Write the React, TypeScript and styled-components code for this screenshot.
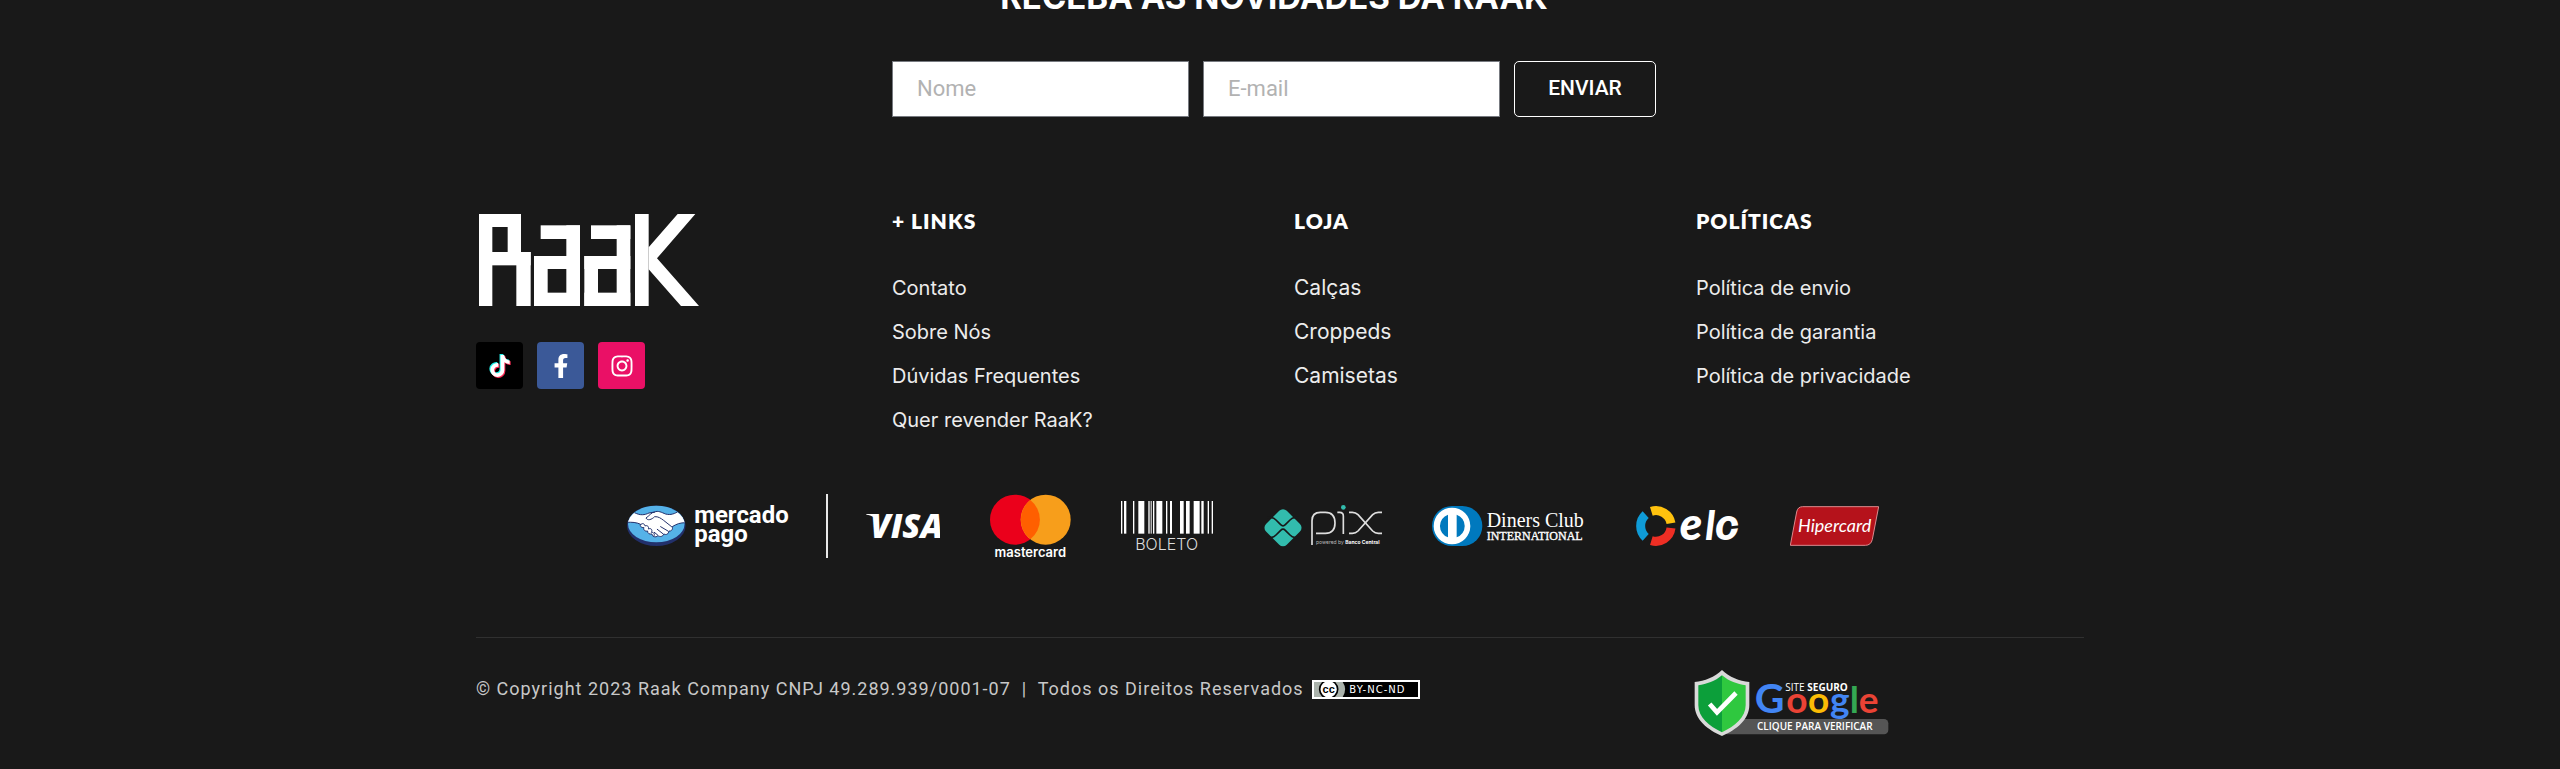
import React from "react";
import styled, { createGlobalStyle } from "styled-components";
import { FaFacebookF, FaInstagram, FaTiktok } from "react-icons/fa";

const ink = "#191919";
const display = '"Inter", "Noto Sans", sans-serif';
const body = '"Roboto", "Liberation Sans", sans-serif';

const GlobalStyle = createGlobalStyle`
  *, *::before, *::after { box-sizing: border-box; }
  html, body { margin: 0; background: ${ink}; }
  body { font-family: ${body}; color: #fff; }
`;

const Page = styled.footer`
  min-height: 100vh;
  background: ${ink};
  overflow: hidden;
`;

const Container = styled.div`
  width: 100%;
  max-width: 1608px;
  margin: 0 auto;
`;

const Columns = styled.div`
  display: grid;
  grid-template-columns: repeat(4, minmax(0, 1fr));
`;

const Newsletter = styled.section`
  grid-column: 2 / 4;
  margin-top: -23px;
  padding: 0 26px 0 14px;
`;

const Title = styled.h2`
  margin: 0 0 44px;
  font: 700 33px/40px ${display};
  text-align: center;
  white-space: nowrap;
`;

const Form = styled.form`
  display: flex;
  gap: 14px;
`;

const Field = styled.input`
  flex: 1;
  min-width: 0;
  height: 56px;
  padding: 0 24px 2px;
  border: 1px solid #777a80;
  border-radius: 0;
  background: #fff;
  color: #333;
  font: 400 22px ${body};
  &::placeholder { color: #b2b2b2; opacity: 1; }
`;

const Submit = styled.button`
  width: 142px;
  height: 56px;
  padding: 0 0 2px;
  border: 1px solid #fff;
  border-radius: 5px;
  background: transparent;
  color: #fff;
  font: 500 21px ${body};
`;

const Links = styled(Columns)`
  padding-top: 92px;
`;

const Brand = styled.div`
  padding-top: 5px;
`;

const LogoLink = styled.a`
  display: block;
  padding-left: 3px;
  svg { display: block; }
`;

const Socials = styled.div`
  display: flex;
  gap: 14px;
  margin-top: 36px;
`;

const Social = styled.a<{ $color: string }>`
  display: flex;
  align-items: center;
  justify-content: center;
  width: 47px;
  height: 47px;
  border-radius: 4px;
  background: ${(p) => p.$color};
  color: #fff;
`;

const Column = styled.nav`
  padding-left: 14px;
`;

const Heading = styled.h3`
  margin: 0 0 43px;
  font: 800 21px/24px "Lato", sans-serif;
  letter-spacing: 1px;
`;

const List = styled.ul<{ $large?: boolean }>`
  display: grid;
  gap: 20px;
  margin: 0;
  padding: 0;
  list-style: none;
  font: 400 ${(p) => (p.$large ? 21 : 20)}px/24px ${display};
`;

const TextLink = styled.a`
  color: #ececec;
  text-decoration: none;
`;

const Payments = styled.div`
  display: flex;
  justify-content: center;
  margin-top: 62px;
  padding-right: 55px;
  svg { display: block; }
`;

const Gateway = styled.div`
  margin-right: 38px;
  padding-right: 36px;
  border-right: 2px solid #e8e8e8;
`;

const Cards = styled.div`
  display: flex;
  gap: 50px;
`;

const Bottom = styled(Columns)`
  margin-top: 79px;
  padding-top: 32px;
  border-top: 1px solid #303030;
`;

const Copyright = styled.p`
  grid-column: 1 / 4;
  display: flex;
  align-items: center;
  gap: 8px;
  height: 38px;
  margin: 0;
  color: #c8c8c8;
  font: 400 18px/24px ${body};
  letter-spacing: 1px;
  white-space: pre;
`;

const SealLink = styled.a`
  padding-left: 12px;
  svg { display: block; }
`;

const Raak = () => (
  <svg width="220" height="92" viewBox="57 72 660 276" role="img" aria-label="RaaK" fill="#fff">
    <rect x="57" y="72" width="40" height="276" />
    <rect x="57" y="72" width="126" height="39" />
    <rect x="143" y="72" width="40" height="153" />
    <rect x="57" y="186" width="155" height="40" />
    <rect x="169" y="186" width="43" height="162" />
    {[222, 373].map((x) => (
      <g key={x}>
        <rect x={x + 20} y="106" width="118" height="41" />
        <rect x={x + 97} y="106" width="41" height="242" />
        <rect x={x} y="198" width="138" height="39" />
        <rect x={x} y="198" width="41" height="150" />
        <rect x={x} y="308" width="138" height="40" />
      </g>
    ))}
    <rect x="525" y="72" width="41" height="276" />
    <path d="M653 72h53L591 205l126 143h-54L566 238v-66z" />
  </svg>
);

const TikTok = () => (
  <svg width="24" height="26" viewBox="0 0 24 26" aria-hidden="true">
    <FaTiktok x={0} y={1} size={22} color="#25f4ee" />
    <FaTiktok x={2} y={3} size={22} color="#fe2c55" />
    <FaTiktok x={1} y={2} size={22} color="#fff" />
  </svg>
);

const MercadoPago = () => (
  <svg width="163" height="64" viewBox="50 42 490 192" role="img" aria-label="Mercado Pago">
    <defs>
      <clipPath id="mp"><ellipse cx="138" cy="132" rx="85" ry="53" /></clipPath>
    </defs>
    <ellipse cx="138" cy="137" rx="88" ry="61" fill="#22306b" />
    <ellipse cx="138" cy="132" rx="85" ry="55" fill="#55b2e8" />
    <g clipPath="url(#mp)" stroke="#22306b" strokeWidth="3" strokeLinejoin="round" strokeLinecap="round">
      <path d="M50 94L73 98C90 107 103 105 116 99L133 96C143 91 154 97 166 102C181 106 195 101 205 93L228 92V128C208 128 200 132 186 140C189 149 183 154 176 153C175 162 168 166 161 162C157 171 149 171 143 167C136 174 126 170 125 162C117 164 111 159 112 153C104 155 98 149 101 143C92 143 88 138 91 133C79 127 65 126 49 127Z" fill="#fff" />
      <path d="M133 96C123 96 117 108 107 114C112 123 124 119 133 110C144 109 152 115 160 121L184 140M151 140L173 153M141 148L159 162M132 157L142 165" fill="none" />
      <path d="M91 134C96 127 104 132 104 138C111 134 117 141 114 147C122 143 128 150 123 157C130 156 136 163 130 169" fill="none" />
    </g>
    <g fill="#fff" fontFamily="Roboto, sans-serif" fontWeight="700" fontSize="72">
      <text x="252" y="128">mercado</text>
      <text x="252" y="185">pago</text>
    </g>
  </svg>
);

const Visa = () => (
  <svg width="74" height="64" viewBox="768 42 222 192" role="img" aria-label="Visa" fill="#fff">
    <path d="M769 102H798L805 128C798 112 785 106 769 104Z" />
    <text x="781" y="173" fontFamily="Open Sans, sans-serif" fontStyle="italic" fontWeight="800" fontSize="99">VISA</text>
  </svg>
);

const Mastercard = () => (
  <svg width="81" height="64" viewBox="58 42 243 192" role="img" aria-label="Mastercard">
    <circle cx="133" cy="119" r="75" fill="#eb001b" />
    <circle cx="225" cy="119" r="75" fill="#f79e1b" />
    <path d="M179 60A75 75 0 0 1 179 178A75 75 0 0 1 179 60Z" fill="#ff5f00" />
    <text x="179" y="230" textAnchor="middle" fill="#fff" fontFamily="Inter, sans-serif" fontWeight="600" fontSize="39">mastercard</text>
  </svg>
);

const bars = [
  [450, 4], [459, 7], [486, 4], [502, 18], [532, 4], [539, 3], [546, 4], [556, 18],
  [585, 4], [597, 6], [627, 11], [645, 11], [668, 18], [691, 7], [710, 4], [722, 4],
];

const Boleto = () => (
  <svg width="92" height="64" viewBox="450 42 276 192" role="img" aria-label="Boleto">
    {bars.map(([x, w]) => (
      <rect key={x} x={x} y="63" width={w} height="98" fill="#fff" />
    ))}
    <text x="587" y="210" textAnchor="middle" fill="#ddd" fontFamily="Inter, sans-serif" fontWeight="300" fontSize="48">BOLETO</text>
  </svg>
);

const Pix = () => (
  <svg width="119" height="64" viewBox="66 42 357 192" role="img" aria-label="Pix">
    <rect x="82" y="99" width="88" height="88" rx="16" transform="rotate(45 126 143)" fill="#32bcad" />
    <g fill="none" stroke={ink} strokeWidth="5">
      <path d="M78 113H92C98 113 101 116 105 120L119 134Q126 141 133 134L147 120C151 116 154 113 160 113H174" />
      <path d="M78 172H92C98 172 101 169 105 165L119 151Q126 144 133 151L147 165C151 169 154 172 160 172H174" />
    </g>
    <g fill="none" stroke="#dedede" strokeWidth="5" strokeLinejoin="round">
      <path d="M213 195V122Q213 97 238 97H253Q282 97 282 129Q282 160 253 160H225" />
      <path d="M289 97H296Q307 97 307 108V162" />
      <path d="M324 97H334Q344 97 351 104L395 153Q402 160 412 160H423" />
      <path d="M324 160H334Q344 160 351 153L395 104Q402 97 412 97H423" />
    </g>
    <circle cx="307" cy="82" r="7" fill="#32bcad" />
    <text x="225" y="193" fill="#bbb" fontFamily="Inter, sans-serif" fontSize="15">
      powered by <tspan fill="#fff" fontWeight="700">Banco Central</tspan>
    </text>
  </svg>
);

const Diners = () => (
  <svg width="154" height="64" viewBox="573 42 462 192" role="img" aria-label="Diners Club International">
    <rect x="573" y="78" width="151" height="120" rx="60" fill="#0079be" />
    <circle cx="633" cy="138" r="55" fill="#fff" />
    <path d="M621 104A36 36 0 0 0 621 172ZM647 104A36 36 0 0 1 647 172Z" fill="#0079be" />
    <g fill="#fff" fontFamily="Liberation Serif, serif">
      <text x="737" y="140" fontSize="60">Diners Club</text>
      <text x="737" y="180" fontSize="36" stroke="#fff">INTERNATIONAL</text>
    </g>
  </svg>
);

const Elo = () => (
  <svg width="104" height="64" viewBox="105 42 312 192" role="img" aria-label="Elo">
    <g fill="none" strokeWidth="27">
      <path d="M151 94A46 46 0 0 1 210 130" stroke="#ffc20e" />
      <path d="M210 144A46 46 0 0 1 151 182" stroke="#ee2e24" />
      <path d="M134 172A46 46 0 0 1 134 104" stroke="#0f9bd7" />
    </g>
    <text y="180" fill="#fff" fontFamily="Lato, sans-serif" fontWeight="900" fontStyle="italic" fontSize="138">
      <tspan x="236">e</tspan>
      <tspan x="313" fontSize="120">l</tspan>
      <tspan x="343">o</tspan>
    </text>
    <path d="M390 143L422 139" stroke={ink} strokeWidth="8" />
  </svg>
);

const Hipercard = () => (
  <svg width="89" height="64" viewBox="570 42 267 192" role="img" aria-label="Hipercard">
    <path d="M608 80H836L817 178Q813 196 796 196H571L590 96Q593 80 608 80Z" fill="#b5121b" stroke="#dc8a8e" strokeWidth="3" />
    <text x="594" y="155" fill="#fff" fontFamily="Lato, sans-serif" fontStyle="italic" fontSize="54">Hipercard</text>
  </svg>
);

const License = () => (
  <svg width="108" height="19" viewBox="48 32 324 57" role="img" aria-label="Creative Commons BY-NC-ND">
    <rect x="48" y="32" width="324" height="57" fill="#fff" />
    <rect x="54" y="38" width="312" height="45" fill="#000" />
    <path d="M54 38H140Q155 60 140 83H54Z" fill="#aab2ab" />
    <circle cx="98" cy="60" r="27" fill="#fff" stroke="#000" strokeWidth="5" clipPath="url(#ccBox)" />
    <clipPath id="ccBox"><rect x="54" y="38" width="312" height="45" /></clipPath>
    <text x="98" y="71" textAnchor="middle" fontFamily="Liberation Sans, sans-serif" fontWeight="700" fontSize="33" letterSpacing="0">cc</text>
    <text x="160" y="71" fill="#fff" fontFamily="DejaVu Sans, sans-serif" fontSize="30" letterSpacing="3">BY-NC-ND</text>
  </svg>
);

const Seal = () => (
  <svg width="195" height="67" viewBox="42 60 585 201" role="img" aria-label="Site seguro Google">
    <rect x="130" y="207" width="495" height="46" rx="13" fill="#555" />
    <path d="M126 60C104 82 74 93 44 96V165C44 209 84 240 126 258C168 240 208 209 208 165V96C178 93 148 82 126 60Z" fill="#d9d9d9" />
    <path d="M126 76C105 94 80 102 55 106V166C55 202 88 229 126 247Z" fill="#0c9f3a" />
    <path d="M126 76C147 94 172 102 197 106V166C197 202 164 229 126 247Z" fill="#2fc83f" />
    <path d="M89 162L111 187L168 129" fill="none" stroke="#fff" strokeWidth="14" />
    <text y="188" fontFamily="Lato, sans-serif" fontWeight="700" fontSize="111">
      <tspan x="224" fontSize="123" fill="#4285f4">G</tspan>
      <tspan x="319" fill="#ea4335">o</tspan>
      <tspan x="384" fill="#fbbc05">o</tspan>
      <tspan x="450" fill="#4285f4">g</tspan>
      <tspan x="509" fill="#34a853">l</tspan>
      <tspan x="536" fill="#ea4335">e</tspan>
    </text>
    <g fill="#fff" fontFamily="Open Sans, sans-serif">
      <text x="316" y="123" fontSize="30">SITE <tspan fontWeight="700">SEGURO</tspan></text>
      <text x="231" y="240" fontSize="30" fontWeight="600">CLIQUE PARA VERIFICAR</text>
    </g>
  </svg>
);

const menus = [
  { title: "+ LINKS", items: ["Contato", "Sobre Nós", "Dúvidas Frequentes", "Quer revender RaaK?"] },
  { title: "LOJA", large: true, items: ["Calças", "Croppeds", "Camisetas"] },
  { title: "POLÍTICAS", items: ["Política de envio", "Política de garantia", "Política de privacidade"] },
];

export default function App() {
  return (
    <>
      <GlobalStyle />
      <Page>
        <Container>
          <Columns>
            <Newsletter>
              <Title>RECEBA AS NOVIDADES DA RAAK</Title>
              <Form onSubmit={(e) => e.preventDefault()}>
                <Field type="text" aria-label="Nome" placeholder="Nome" />
                <Field type="email" aria-label="E-mail" placeholder="E-mail" />
                <Submit type="submit">ENVIAR</Submit>
              </Form>
            </Newsletter>
          </Columns>

          <Links>
            <Brand>
              <LogoLink href="#"><Raak /></LogoLink>
              <Socials>
                <Social href="#" $color="#000" aria-label="TikTok"><TikTok /></Social>
                <Social href="#" $color="#3b5998" aria-label="Facebook"><FaFacebookF size={24} /></Social>
                <Social href="#" $color="#ea1066" aria-label="Instagram"><FaInstagram size={24} /></Social>
              </Socials>
            </Brand>
            {menus.map((menu) => (
              <Column key={menu.title} aria-label={menu.title}>
                <Heading>{menu.title}</Heading>
                <List $large={menu.large}>
                  {menu.items.map((item) => (
                    <li key={item}><TextLink href="#">{item}</TextLink></li>
                  ))}
                </List>
              </Column>
            ))}
          </Links>

          <Payments>
            <Gateway><MercadoPago /></Gateway>
            <Cards>
              <Visa />
              <Mastercard />
              <Boleto />
              <Pix />
              <Diners />
              <Elo />
              <Hipercard />
            </Cards>
          </Payments>

          <Bottom>
            <Copyright>
              <span>{"© Copyright 2023 Raak Company CNPJ 49.289.939/0001-07  |  Todos os Direitos Reservados"}</span>
              <License />
            </Copyright>
            <SealLink href="#"><Seal /></SealLink>
          </Bottom>
        </Container>
      </Page>
    </>
  );
}
